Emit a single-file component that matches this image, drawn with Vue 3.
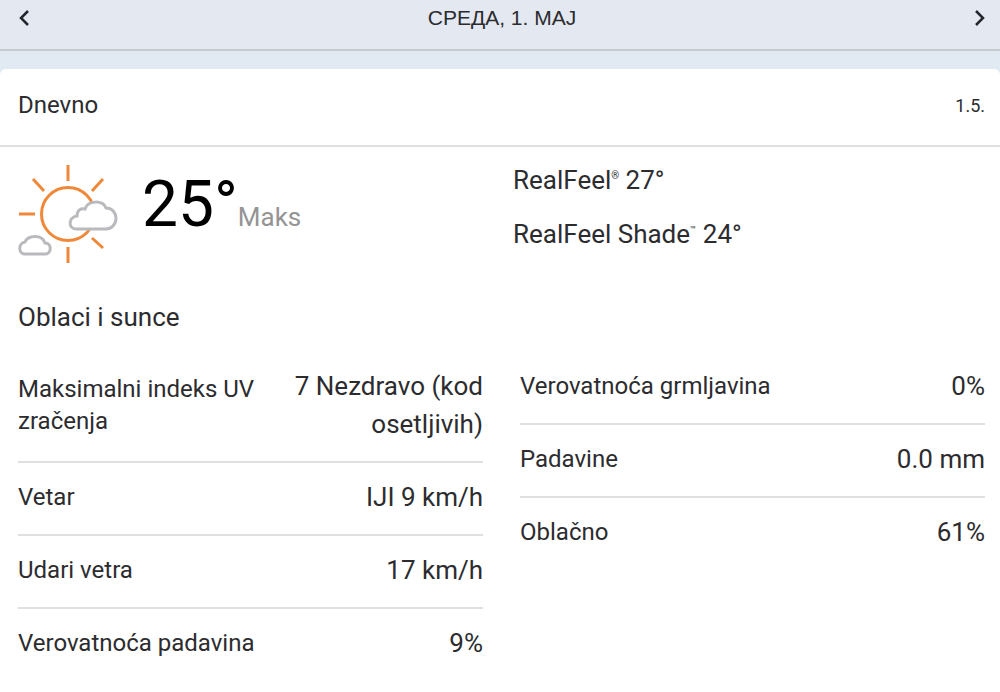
<script setup>
import { ref } from "vue"

const day = ref({
  title: "СРЕДА, 1. МАЈ",
  date: "1.5.",
  temp: "25°",
  phrase: "Oblaci i sunce"
})

const left = [
  { label: "Maksimalni indeks UV zračenja", value: "7 Nezdravo (kod osetljivih)" },
  { label: "Vetar", value: "IJI 9 km/h" },
  { label: "Udari vetra", value: "17 km/h" },
  { label: "Verovatnoća padavina", value: "9%" }
]

const right = [
  { label: "Verovatnoća grmljavina", value: "0%" },
  { label: "Padavine", value: "0.0 mm" },
  { label: "Oblačno", value: "61%" }
]

const emit = defineEmits(["prev", "next"])
</script>

<template>
  <div class="page">
    <header class="day-nav">
      <button type="button" aria-label="Prethodni dan" @click="emit('prev')">
        <svg width="12" height="18" viewBox="0 0 12 18">
          <path d="M10 2 L3 9 L10 16" />
        </svg>
      </button>
      <h1>{{ day.title }}</h1>
      <button type="button" aria-label="Sledeći dan" @click="emit('next')">
        <svg width="12" height="18" viewBox="0 0 12 18">
          <path d="M2 2 L9 9 L2 16" />
        </svg>
      </button>
    </header>

    <main class="card">
      <div class="card-header">
        <h2>Dnevno</h2>
        <span class="date">{{ day.date }}</span>
      </div>

      <div class="summary">
        <div class="current">
          <svg class="icon" width="100" height="100" viewBox="0 0 100 100">
            <g class="sun">
              <path d="M50 1 V17 M50 83 V99 M1 50 H17 M15 15 L26 27 M85 15 L74 27 M74 74 L85 84" />
              <circle cx="50" cy="50" r="26.5" />
            </g>
            <path
              class="cloud"
              d="M58 65 C50 65 50 53 59 52 C59 46 63 44 67 45 C70 36 85 36 88 44 C95 44 98 50 98 54 C98 61 93 65 88 65 Z"
            />
            <path
              class="cloud"
              d="M7 90 C0 90 0 79 7 78 C10 71 24 70 27 79 C34 79 34 90 27 90 Z"
            />
          </svg>
          <div class="temp">
            <span class="degrees">{{ day.temp }}</span>
            <span class="max">Maks</span>
          </div>
        </div>
        <div class="realfeel">
          <div>RealFeel<sup>®</sup> 27°</div>
          <div>RealFeel Shade<sup>™</sup> 24°</div>
        </div>
      </div>

      <p class="phrase">{{ day.phrase }}</p>

      <div class="details">
        <dl v-for="(col, i) in [left, right]" :key="i">
          <div v-for="item in col" :key="item.label" class="row">
            <dt>{{ item.label }}</dt>
            <dd>{{ item.value }}</dd>
          </div>
        </dl>
      </div>
    </main>
  </div>
</template>

<style>
body {
  background: #fff;
}
</style>

<style scoped>
.page {
  background: #e1eaf2;
  color: #2c2c2f;
  font-family: Roboto, "Liberation Sans", sans-serif;
  font-size: 24px;
}

h1, h2, p, dl, dt, dd {
  margin: 0;
  font-weight: 400;
}

.day-nav {
  display: flex;
  align-items: center;
  justify-content: space-between;
  padding: 0 8px 14px 12px;
  background: #e3e8f1;
  border-bottom: 2px solid #c7cbcf;
}

.day-nav h1 {
  font-family: "Liberation Sans", Arial, sans-serif;
  font-size: 21px;
  line-height: 35px;
}

.day-nav button {
  display: flex;
  padding: 0 6px;
  border: none;
  background: none;
  cursor: pointer;
}

.day-nav path {
  fill: none;
  stroke: #24262b;
  stroke-width: 2.5;
}

.card {
  margin-top: 18px;
  padding-bottom: 12px;
  background: #fff;
  border-radius: 6px 6px 0 0;
}

.card-header {
  display: flex;
  align-items: center;
  justify-content: space-between;
  padding: 17px 15px 21px 18px;
  border-bottom: 2px solid #e0e0e0;
}

.card-header h2 {
  font-size: 24px;
  line-height: 38px;
}

.date {
  font-size: 18px;
}

.summary {
  display: grid;
  grid-template-columns: 1fr 1fr;
  padding: 17px 0 0 18px;
  column-gap: 8px;
}

.current {
  display: flex;
}

.icon {
  flex: none;
}

.sun {
  fill: none;
  stroke: #f0883a;
  stroke-width: 3;
}

.cloud {
  fill: #fff;
  stroke: #b9babd;
  stroke-width: 3;
}

.temp {
  display: flex;
  align-items: baseline;
  margin-left: 24px;
  line-height: 82px;
}

.degrees {
  color: #000;
  font-size: 64px;
}

.max {
  color: #949494;
  font-size: 26px;
}

.realfeel {
  font-size: 26px;
  line-height: 32px;
}

.realfeel div + div {
  margin-top: 22px;
}

.realfeel sup {
  font-size: 10px;
  line-height: 0;
  vertical-align: 10px;
}

.phrase {
  padding: 34px 18px 0;
  font-size: 26px;
  line-height: 38px;
}

.details {
  display: grid;
  grid-template-columns: 1fr 1fr;
  align-items: start;
  column-gap: 37px;
  padding: 16px 15px 0 18px;
}

.row {
  display: flex;
  align-items: center;
  justify-content: space-between;
  gap: 16px;
  padding: 15px 0 18px;
  border-bottom: 2px solid #e0e0e0;
}

.row:last-child {
  border-bottom: none;
}

dt {
  flex: 1 1 auto;
  line-height: 32px;
}

dd {
  max-width: 42%;
  font-size: 26px;
  line-height: 38px;
  text-align: right;
}
</style>
